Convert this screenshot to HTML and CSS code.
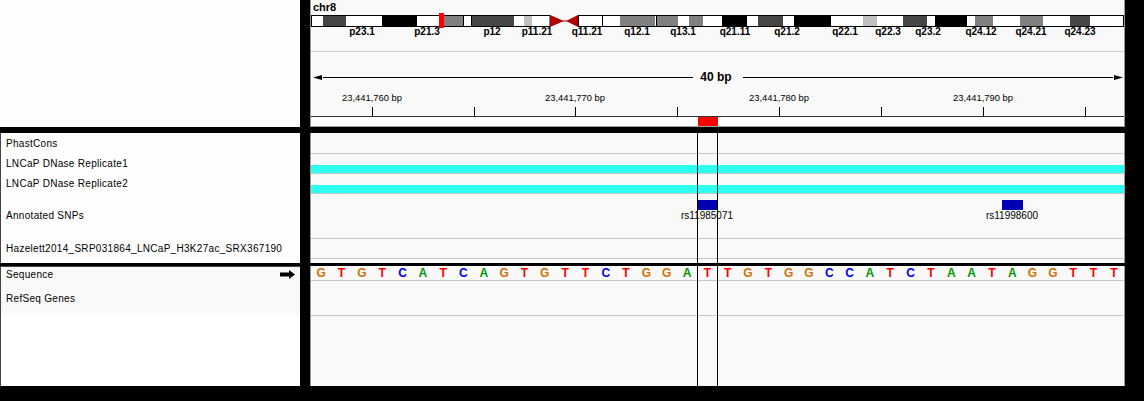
FILE: index.html
```html
<!DOCTYPE html>
<html>
<head>
<meta charset="utf-8">
<title>IGV</title>
<link rel="stylesheet" href="styles.css">
</head>
<body>
<div class="igv">
  <div class="row row-top">
    <div class="names names-top"></div>
    <div class="data data-top">
      <div class="header">
        <div class="chrom">chr8</div>
        <svg class="ideo" width="813" height="15" viewBox="0 0 813 15">
          <rect x="0.5" y="2.5" width="238.5" height="11" fill="#fff" stroke="#000"/>
          <rect x="267.5" y="2.5" width="545" height="11" fill="#fff" stroke="#000"/>
          <g shape-rendering="crispEdges">
            <rect x="12" y="3" width="23" height="10" fill="#464646"/>
            <rect x="71" y="3" width="35" height="10" fill="#000"/>
            <rect x="133" y="3" width="19" height="10" fill="#808080"/>
            <rect x="152" y="3" width="1" height="10" fill="#000"/>
            <rect x="160" y="3" width="1" height="10" fill="#000"/>
            <rect x="161" y="3" width="42" height="10" fill="#464646"/>
            <rect x="213" y="3" width="8" height="10" fill="#c0c0c0"/>
            <rect x="291" y="3" width="1" height="10" fill="#000"/>
            <rect x="309" y="3" width="35" height="10" fill="#808080"/>
            <rect x="345" y="3" width="1" height="10" fill="#000"/>
            <rect x="346" y="3" width="21" height="10" fill="#808080"/>
            <rect x="378" y="3" width="14" height="10" fill="#808080"/>
            <rect x="411" y="3" width="25" height="10" fill="#000"/>
            <rect x="447" y="3" width="25" height="10" fill="#464646"/>
            <rect x="483" y="3" width="37" height="10" fill="#000"/>
            <rect x="552" y="3" width="14" height="10" fill="#c0c0c0"/>
            <rect x="592" y="3" width="24" height="10" fill="#464646"/>
            <rect x="624" y="3" width="32" height="10" fill="#000"/>
            <rect x="664" y="3" width="18" height="10" fill="#808080"/>
            <rect x="709" y="3" width="23" height="10" fill="#808080"/>
            <rect x="759" y="3" width="20" height="10" fill="#464646"/>
          </g>
          <polygon points="239,2 253,8 239,14" fill="#b00000"/>
          <rect x="252" y="7.5" width="4" height="1" fill="#b00000"/>
          <polygon points="267,2 255,8 267,14" fill="#b00000"/>
          <rect x="128" y="0" width="5" height="15" fill="#ff0000"/>
        </svg>
        <div class="cyto-labels">
          <span class="cyto" style="left:51px">p23.1</span>
          <span class="cyto" style="left:116px">p21.3</span>
          <span class="cyto" style="left:181px">p12</span>
          <span class="cyto" style="left:226px">p11.21</span>
          <span class="cyto" style="left:276px">q11.21</span>
          <span class="cyto" style="left:326px">q12.1</span>
          <span class="cyto" style="left:372px">q13.1</span>
          <span class="cyto" style="left:424px">q21.11</span>
          <span class="cyto" style="left:476px">q21.2</span>
          <span class="cyto" style="left:534px">q22.1</span>
          <span class="cyto" style="left:577px">q22.3</span>
          <span class="cyto" style="left:617px">q23.2</span>
          <span class="cyto" style="left:670px">q24.12</span>
          <span class="cyto" style="left:720px">q24.21</span>
          <span class="cyto" style="left:769px">q24.23</span>
        </div>
      </div>
      <div class="ruler">
        <div class="span-line">
          <svg class="arrowhead" width="10" height="7" viewBox="0 0 10 7"><polygon points="0,3.5 9,1 9,6" fill="#000"/></svg>
          <div class="line"></div>
          <span class="span-text">40 bp</span>
          <div class="line"></div>
          <svg class="arrowhead" width="10" height="7" viewBox="0 0 10 7"><polygon points="10,3.5 1,1 1,6" fill="#000"/></svg>
        </div>
        <div class="ticks">
          <span class="tick-label" style="left:61px">23,441,760 bp</span>
          <span class="tick-label" style="left:264px">23,441,770 bp</span>
          <span class="tick-label" style="left:468px">23,441,780 bp</span>
          <span class="tick-label" style="left:672px">23,441,790 bp</span>
          <span class="tick" style="left:61px"></span>
          <span class="tick" style="left:163px"></span>
          <span class="tick" style="left:264px"></span>
          <span class="tick" style="left:366px"></span>
          <span class="tick" style="left:468px"></span>
          <span class="tick" style="left:570px"></span>
          <span class="tick" style="left:672px"></span>
          <span class="tick" style="left:774px"></span>
        </div>
      </div>
      <div class="roi-strip"><div class="roi" style="left:387px;width:20px"></div></div>
    </div>
  </div>

  <div class="row row-mid">
    <div class="names names-mid">
      <div class="name h20">PhastCons</div>
      <div class="name h20">LNCaP DNase Replicate1</div>
      <div class="name h20">LNCaP DNase Replicate2</div>
      <div class="name h45">Annotated SNPs</div>
      <div class="name h20">Hazelett2014_SRP031864_LNCaP_H3K27ac_SRX367190</div>
    </div>
    <div class="data data-mid">
      <div class="track t-phast"></div>
      <div class="track t-dnase"><div class="cover"></div></div>
      <div class="track t-dnase"><div class="cover"></div></div>
      <div class="track t-snp">
        <div class="snp" style="left:386px;width:20px"></div>
        <span class="snp-label" style="left:396px">rs11985071</span>
        <div class="snp" style="left:691px;width:21px"></div>
        <span class="snp-label" style="left:701px">rs11998600</span>
      </div>
      <div class="track t-haz"></div>
      <div class="vline" style="left:386px"></div>
      <div class="vline" style="left:406px"></div>
    </div>
  </div>

  <div class="row row-bot">
    <div class="names names-bot">
      <div class="name seq-name">
        <span>Sequence</span>
        <svg class="strand" width="15" height="9" viewBox="0 0 15 9"><path d="M0 2.5 H9 V0 L15 4.5 L9 9 V6.5 H0 Z" fill="#000"/></svg>
      </div>
      <div class="name refseq-name">RefSeq Genes</div>
    </div>
    <div class="data data-bot">
      <div class="track t-seq">
        <span class="G">G</span><span class="T">T</span><span class="G">G</span><span class="T">T</span><span class="C">C</span><span class="A">A</span><span class="T">T</span><span class="C">C</span><span class="A">A</span><span class="G">G</span>
        <span class="T">T</span><span class="G">G</span><span class="T">T</span><span class="T">T</span><span class="C">C</span><span class="T">T</span><span class="G">G</span><span class="G">G</span><span class="A">A</span><span class="T">T</span>
        <span class="T">T</span><span class="G">G</span><span class="T">T</span><span class="G">G</span><span class="G">G</span><span class="C">C</span><span class="C">C</span><span class="A">A</span><span class="T">T</span><span class="C">C</span>
        <span class="T">T</span><span class="A">A</span><span class="A">A</span><span class="T">T</span><span class="A">A</span><span class="G">G</span><span class="G">G</span><span class="T">T</span><span class="T">T</span><span class="T">T</span>
      </div>
      <div class="track t-refseq"></div>
      <div class="vline" style="left:386px"></div>
      <div class="vline" style="left:406px"></div>
    </div>
  </div>
</div>
</body>
</html>
```

FILE: styles.css
```css
* { box-sizing: border-box; }
html, body { margin: 0; padding: 0; }
body {
  background: #000;
  width: 1144px;
  height: 401px;
  overflow: hidden;
  font-family: "Liberation Sans", Arial, sans-serif;
  color: #000;
}
.igv { display: flex; flex-direction: column; }
.row { display: flex; column-gap: 10px; }
.row-top { height: 127px; }
.row-mid { height: 130px; margin-top: 6px; }
.row-bot { height: 120px; margin-top: 3px; }

.names { width: 300px; flex: none; background: #fefefe; }
.data {
  width: 815px;
  flex: none;
  background: #f9f9f9;
  border-left: 1px solid #9a9a9a;
  border-right: 1px solid #9a9a9a;
  position: relative;
}

/* top header */
.data-top { display: flex; flex-direction: column; }
.header { height: 52px; border-bottom: 1px solid #cfcfcf; }
.chrom {
  font-weight: bold;
  font-size: 11px;
  line-height: 11px;
  height: 13px;
  padding: 2px 0 0 2px;
}
.ideo { display: block; }
.cyto-labels { position: relative; height: 12px; margin-top: -2px; }
.cyto {
  position: absolute;
  top: 0;
  transform: translateX(-50%);
  font-weight: bold;
  font-size: 10px;
  line-height: 12px;
  white-space: nowrap;
}

.ruler { height: 64px; position: relative; padding-top: 20px; }
.span-line { display: flex; align-items: center; height: 10px; padding: 0 1px 0 2px; }
.arrowhead { display: block; flex: none; }
.line { flex: 1; height: 1px; background: #000; }
.span-text {
  font-weight: bold;
  font-size: 12px;
  line-height: 10px;
  padding: 0 11px 0 7px;
  white-space: nowrap;
}
.ticks { position: absolute; left: 0; right: 0; top: 40px; height: 24px; }
.tick-label {
  position: absolute;
  top: 0;
  transform: translateX(-50%);
  font-size: 9.4px;
  line-height: 12px;
  white-space: nowrap;
}
.tick { position: absolute; top: 15px; width: 1px; height: 9px; background: #000; }

.roi-strip {
  height: 11px;
  background: #fff;
  border-top: 1px solid #333;
  border-bottom: 1px solid #a0a0a0;
  position: relative;
}
.roi { position: absolute; top: 0; height: 9px; background: #ff0000; }

/* name panels */
.name {
  display: flex;
  align-items: center;
  padding-left: 5px;
  font-size: 10px;
  letter-spacing: 0.3px;
  white-space: nowrap;
}
.names-mid, .names-bot { border-left: 1px solid #444; }
.h20 { height: 20px; }
.h45 { height: 45px; }
.names-bot { border-top: 1px solid #444; background: #fff; }
.seq-name {
  height: 14px;
  background: #f9f9f9;
  justify-content: space-between;
  padding-right: 5px;
}
.strand { display: block; }
.refseq-name { height: 34px; background: #f9f9f9; }

/* tracks */
.track { border-bottom: 1px solid #c8c8cc; position: relative; }
.t-phast { height: 21px; }
.t-dnase { height: 20px; padding-top: 11px; }
.cover { height: 8px; background: rgb(45, 255, 240); }
.t-snp { height: 45px; }
.t-haz { height: 20px; }
.snp { position: absolute; top: 6px; height: 10px; background: #0000b2; }
.snp-label {
  position: absolute;
  top: 16px;
  transform: translateX(-50%);
  font-size: 10px;
  line-height: 12px;
  white-space: nowrap;
}
.vline { position: absolute; top: 0; bottom: 0; width: 1px; background: #000; }

.t-seq {
  height: 15px;
  display: grid;
  grid-template-columns: repeat(40, 1fr);
  font-weight: bold;
  font-size: 12px;
  line-height: 15px;
  text-align: center;
}
.t-refseq { height: 35px; }
.A { color: rgb(0, 150, 0); }
.C { color: rgb(0, 0, 255); }
.G { color: rgb(209, 113, 5); }
.T { color: rgb(255, 0, 0); }
```
